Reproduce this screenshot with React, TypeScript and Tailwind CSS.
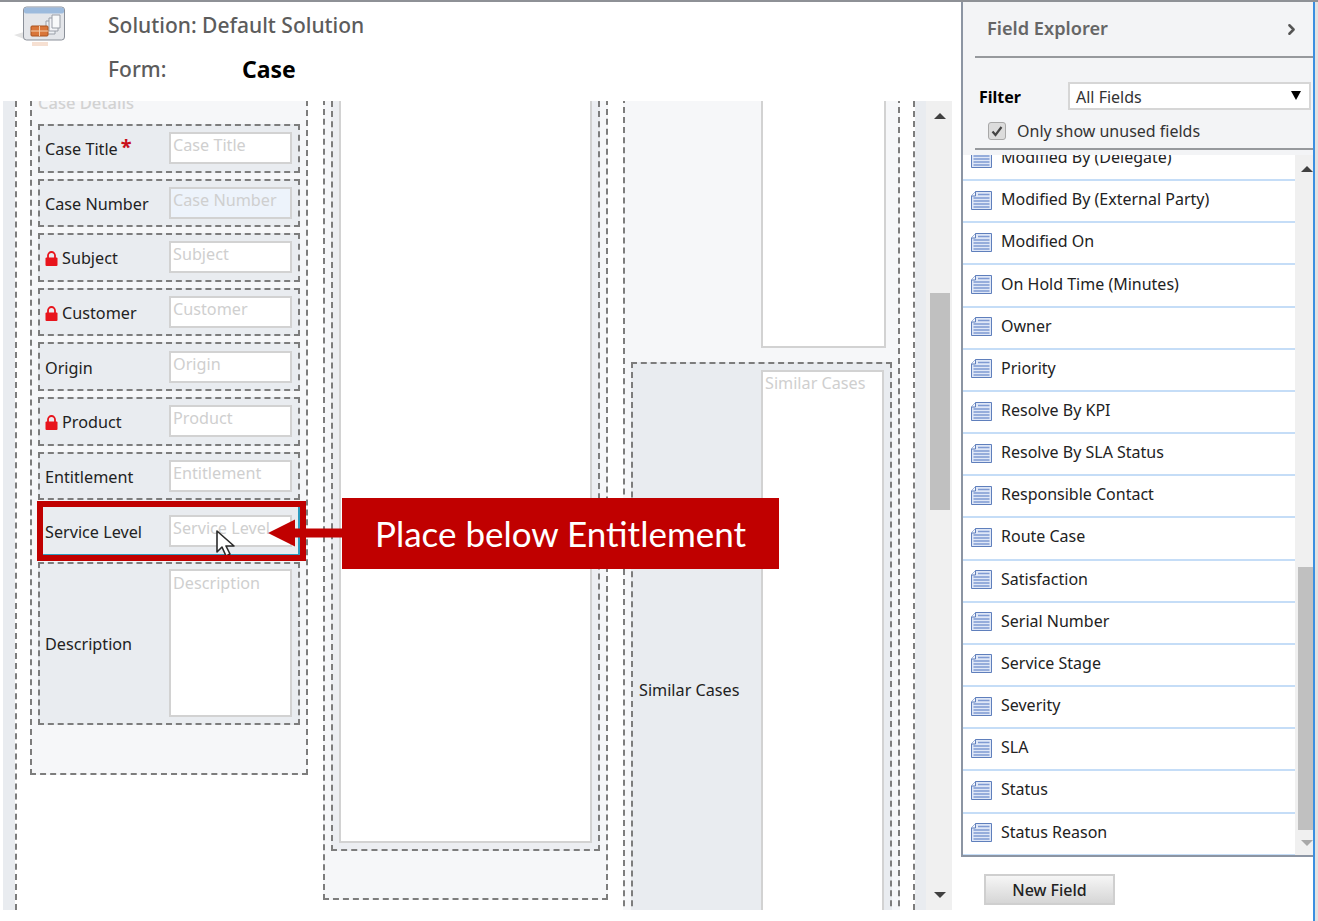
import React from "react";
import { ChevronRight } from "lucide-react";

const formFields = [
  { label: "Case Title", required: true },
  { label: "Case Number", readOnly: true },
  { label: "Subject", locked: true },
  { label: "Customer", locked: true },
  { label: "Origin" },
  { label: "Product", locked: true },
  { label: "Entitlement" }
];

const explorerFields = [
  "Modified By (Delegate)",
  "Modified By (External Party)",
  "Modified On",
  "On Hold Time (Minutes)",
  "Owner",
  "Priority",
  "Resolve By KPI",
  "Resolve By SLA Status",
  "Responsible Contact",
  "Route Case",
  "Satisfaction",
  "Serial Number",
  "Service Stage",
  "Severity",
  "SLA",
  "Status",
  "Status Reason"
];

function LockIcon() {
  return (
    <svg width="13" height="15" viewBox="0 0 13 15" className="mr-[4px] shrink-0">
      <path d="M3 7V4.5a3.5 3.5 0 0 1 7 0V7" fill="none" stroke="#e8141c" strokeWidth="1.8" />
      <rect x="0.5" y="6.5" width="12" height="8.5" rx="1" fill="#e8141c" />
    </svg>
  );
}

function FieldIcon() {
  return (
    <svg width="21" height="19" viewBox="0 0 21 19" className="mt-[2px] shrink-0">
      <path d="M0.5 5 L4.5 0.5 H20.5 V18.5 H0.5 Z" fill="#dfe7f7" stroke="#5f7fbc" />
      <path d="M4.5 0.5 V5 H0.5" fill="#f2f5fb" stroke="#5f7fbc" />
      <path d="M7 3.5 H18.5 M2.5 7 H18.5 M2.5 10 H18.5 M2.5 13 H18.5 M2.5 16 H18.5" stroke="#7f9ad2" strokeWidth="1.5" />
    </svg>
  );
}

function SolutionIcon() {
  return (
    <svg width="52" height="44" viewBox="0 0 52 44" className="shrink-0">
      <path d="M0 29 L10 33 V26 Z" fill="#e4e4e4" />
      <rect x="9.5" y="1" width="41" height="33" rx="3" fill="#e4e6ea" stroke="#8b9099" />
      <rect x="10" y="1.5" width="40" height="6" rx="2" fill="#9dbbdd" />
      <path d="M32 15 h9 v13 h-9 Z" fill="#eef1f5" stroke="#9a9fa8" />
      <path d="M35 12 h9 v13 h-9 Z" fill="#f3f4f7" stroke="#9a9fa8" />
      <path d="M38 9 h8 v13 h-8 Z" fill="#f8f9fa" stroke="#9a9fa8" />
      <rect x="17" y="20" width="17" height="10" rx="1" fill="#d9763a" stroke="#a9521f" />
      <path d="M17 25 H34 M25.5 20 V30" stroke="#f3cfae" />
      <rect x="18" y="36" width="16" height="4" fill="#f6e0d2" />
    </svg>
  );
}

function FormField({ label, required, readOnly, locked }: { label: string; required?: boolean; readOnly?: boolean; locked?: boolean }) {
  return (
    <div className="flex h-[48.6px] items-center border-2 border-dashed border-[#7d7d7d] bg-[#e9ecf0] pl-[5px]">
      <div className="flex w-[124px] items-center pt-[2px] text-[16.2px] text-[#222]">
        {locked && <LockIcon />}
        <span>{label}</span>
        {required && <span className="ml-[3px] -mt-[5px] text-[20px] leading-[20px] font-bold text-[#c8101a]">*</span>}
      </div>
      <div className={`h-[32px] w-[123px] border-2 border-[#d2d2d2] pl-[2px] text-[16.2px] leading-[22px] text-[#cfcfcf] ${readOnly ? "bg-[#edf3fb]" : "bg-white"}`}>
        {label}
      </div>
    </div>
  );
}

function App() {
  return (
    <div
      className="relative flex h-[921px] w-[1318px] overflow-hidden border-t-2 border-[#8e9196] bg-white"
      style={{ fontFamily: '"Noto Sans", sans-serif' }}
    >
      <div className="flex w-[961px] flex-col">
        <div className="flex h-[99px] pl-[14px] pt-[4px]">
          <SolutionIcon />
          <div className="pl-[42px]">
            <div className="pt-[5px] text-[21px] leading-[28px] font-medium text-[#5c5c5c]">Solution: Default Solution</div>
            <div className="mt-[16px] flex items-center">
              <span className="w-[134px] text-[21px] leading-[28px] font-medium text-[#5c5c5c]">Form:</span>
              <span className="text-[23px] leading-[28px] font-bold text-black">Case</span>
            </div>
          </div>
        </div>

        <div className="flex h-[809px] w-[952px] overflow-hidden pl-[3px]">
          <div className="w-[12px] shrink-0 bg-[#e9ecf0]" />
          <div className="flex w-[900px] shrink-0 items-start gap-[15px] border-x-2 border-dashed border-[#7d7d7d] bg-white pl-[13px]">
            <div className="-mt-[11px] w-[278px] shrink-0 border-2 border-dashed border-[#7d7d7d] bg-[#f6f7f9] px-[6px] pb-[48px]">
              <div className="mb-[10px] text-[16.5px] leading-[22px] font-medium text-[#d2d2d2]">Case Details</div>
              <div className="flex flex-col gap-[6px]">
                {formFields.map((f) => (
                  <FormField key={f.label} {...f} />
                ))}
                <div className="relative flex h-[48.6px] items-center border-x-2 border-y border-[#2c9cc0] bg-[#e9ecf0] pl-[5px]">
                  <div className="w-[124px] pt-[3px] text-[16.2px] text-[#222]">Service Level</div>
                  <div className="mt-[2px] h-[32px] w-[123px] border-2 border-[#d2d2d2] bg-white pl-[2px] text-[16.2px] leading-[22px] text-[#cfcfcf]">
                    Service Level
                  </div>
                  <svg width="22" height="28" viewBox="0 0 22 28" className="absolute left-[176px] top-[23px]">
                    <path d="M1 1 V22 L6 17 L10 26 L14 24 L10 16 H18 Z" fill="#fff" stroke="#2a2a2a" strokeWidth="1.6" strokeLinejoin="round" />
                  </svg>
                  <div className="absolute -left-[3px] -right-[8px] -top-[6px] -bottom-[7px] border-[6px] border-[#c00000]" />
                </div>
                <div className="mt-[1px] flex h-[163px] items-center border-2 border-dashed border-[#7d7d7d] bg-[#e9ecf0] pl-[5px]">
                  <div className="w-[124px] pt-[2px] text-[16.2px] text-[#222]">Description</div>
                  <div className="h-[148px] w-[123px] border-2 border-[#d2d2d2] bg-white pl-[2px] pt-[1px] text-[16.2px] leading-[22px] text-[#cfcfcf]">
                    Description
                  </div>
                </div>
              </div>
            </div>

            <div className="-mt-[12px] h-[811px] w-[285px] shrink-0 border-2 border-dashed border-[#7d7d7d] bg-[#f6f7f9] px-[6px] pb-[47px]">
              <div className="h-full border-2 border-dashed border-[#7d7d7d] bg-[#eceef2] px-[6px] pb-[6px]">
                <div className="h-full border-2 border-[#d2d2d2] bg-white" />
              </div>
            </div>

            <div className="-mt-[4px] h-[1000px] w-[277px] shrink-0 border-x-2 border-dashed border-[#7d7d7d] bg-[#f6f7f9]">
              <div className="ml-[136px] h-[251px] w-[125px] border-2 border-[#d2d2d2] bg-white" />
              <div className="mx-[6px] mt-[14px] flex h-[654px] items-start border-2 border-dashed border-[#7d7d7d] bg-[#e9ecf0] p-[6px]">
                <div className="w-[122px] self-center pt-[2px] text-[16.2px] text-[#222]">Similar Cases</div>
                <div className="h-full w-[123px] border-2 border-[#d2d2d2] bg-white pl-[2px] text-[16.2px] leading-[22px] text-[#cfcfcf]">
                  Similar Cases
                </div>
              </div>
            </div>
          </div>
          <div className="w-[11px] shrink-0 bg-[#e9ecf0]" />
          <div className="flex w-[26px] shrink-0 flex-col items-center bg-[#f0f0f0] pl-[1px] pt-[12px]">
            <div className="h-0 w-0 border-x-[6px] border-b-[6px] border-x-transparent border-b-[#404040]" />
            <div className="mt-[174px] h-[217px] w-[20px] bg-[#c0c0c0]" />
            <div className="mt-[382px] h-0 w-0 border-x-[6px] border-t-[6px] border-x-transparent border-t-[#404040]" />
          </div>
        </div>
      </div>

      <div className="flex w-[354px] shrink-0 flex-col border-r-2 border-[#3b8fe0]">
        <div className="h-[153px] shrink-0 border-l-2 border-[#8c95a3] bg-[#f3f4f6]">
          <div className="ml-[12px] flex h-[56px] items-center justify-between border-b-2 border-[#96999d] pl-[12px] pr-[13px]">
            <span className="text-[18.2px] font-semibold text-[#666]">Field Explorer</span>
            <ChevronRight size={17} strokeWidth={3.5} className="text-[#555]" />
          </div>
          <div className="mt-[24px] flex items-center pl-[16px]">
            <span className="w-[89px] pt-[1px] text-[16px] font-bold text-black">Filter</span>
            <div className="flex h-[28px] w-[243px] items-center justify-between border-2 border-[#d6d6d6] bg-white pl-[6px] pr-[8px] text-[16px] text-[#333]">
              <span className="pt-[1px]">All Fields</span>
              <div className="mb-[2px] h-0 w-0 border-x-[5px] border-t-[9px] border-x-transparent border-t-black" />
            </div>
          </div>
          <div className="mt-[9px] flex items-center pl-[25px]">
            <div className="flex h-[18px] w-[18px] items-center justify-center rounded-[3px] border border-[#a8a8a8] bg-[#dcdcdc]">
              <svg width="12" height="12" viewBox="0 0 12 12">
                <path d="M1.5 6.5 L4.5 10 L10.5 2" fill="none" stroke="#444" strokeWidth="2.2" />
              </svg>
            </div>
            <span className="ml-[11px] text-[16px] text-[#333]">Only show unused fields</span>
          </div>
          <div className="ml-[12px] mt-[5px] h-[2px] bg-[#96999d]" />
        </div>

        <div className="flex h-[702px] shrink-0 overflow-hidden border-b-2 border-l-2 border-[#8c95a3]">
          <div className="-mt-[16px] w-[332px] shrink-0">
            {explorerFields.map((name) => (
              <div key={name} className="flex h-[42.17px] items-center border-b-2 border-[#c5ddf7] pb-[4px] pl-[8px]">
                <FieldIcon />
                <span className="ml-[9px] text-[16px] text-[#222]">{name}</span>
              </div>
            ))}
          </div>
          <div className="flex w-[18px] shrink-0 flex-col items-end bg-[#f0f0f0]">
            <div className="mr-[0px] mt-[11px] h-0 w-0 border-x-[6px] border-b-[6px] border-x-transparent border-b-[#404040]" />
            <div className="mt-[395px] h-[263px] w-[15px] bg-[#c0c0c0]" />
            <div className="mt-[10px] h-0 w-0 border-x-[6px] border-t-[6px] border-x-transparent border-t-[#a8a8a8]" />
          </div>
        </div>

        <div className="pl-[23px] pt-[17px]">
          <div className="flex h-[31px] w-[131px] items-center justify-center border-2 border-[#cfcfcf] bg-gradient-to-b from-[#f6f6f6] to-[#d6d6d6] text-[16px] font-medium text-[#222]">
            New Field
          </div>
        </div>
      </div>

      <div className="flex-1 bg-[#e2e2e2]" />

      <svg width="74" height="28" viewBox="0 0 74 28" className="absolute left-[268px] top-[517px]">
        <path d="M0 14 L27 0.5 V9.5 H74 V18.5 H27 V27.5 Z" fill="#c00000" />
      </svg>
      <div
        className="absolute left-[342px] top-[496px] flex h-[71px] w-[437px] items-center justify-center bg-[#c00000] text-[35px] text-white"
        style={{ fontFamily: "Lato, sans-serif" }}
      >
        Place below Entitlement
      </div>
    </div>
  );
}

export default App;
